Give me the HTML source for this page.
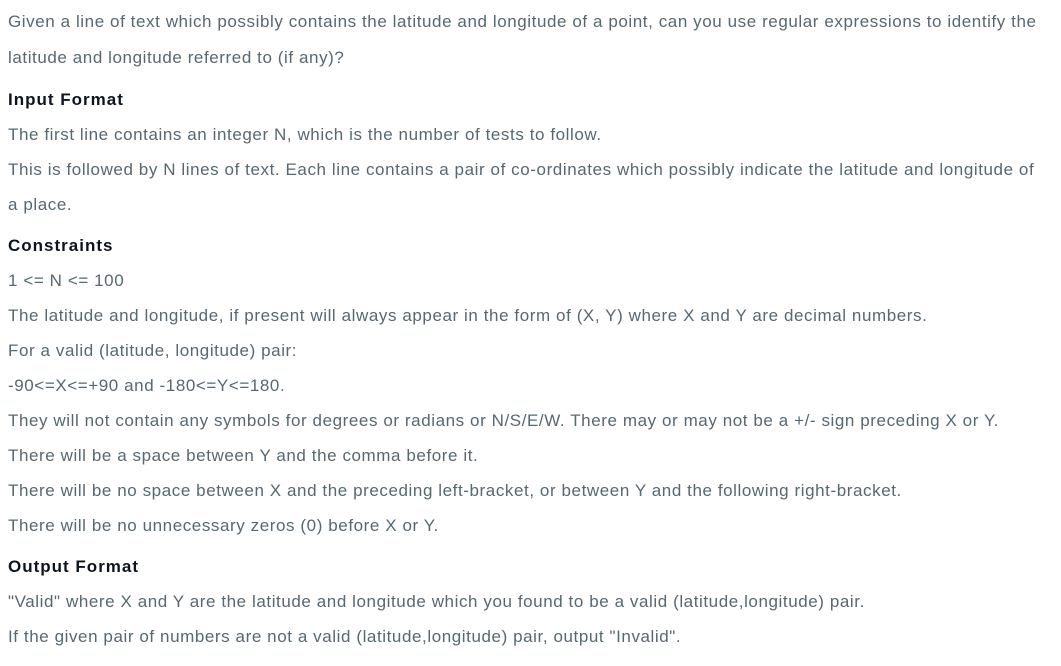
<!DOCTYPE html>
<html><head><meta charset="utf-8"><style>
body{margin:0;width:1061px;height:666px;background:#fff;position:relative;overflow:hidden;font-family:"Liberation Sans",Arial,sans-serif;}
div{position:absolute;left:8px;font-size:17px;letter-spacing:0.58px;color:#576871;white-space:nowrap;line-height:20px;}
.h{color:#0e141e;font-weight:bold;letter-spacing:1px;}
</style></head><body>
<div style="top:12px">Given a line of text which possibly contains the latitude and longitude of a point, can you use regular expressions to identify the</div>
<div style="top:48px">latitude and longitude referred to (if any)?</div>
<div class="h" style="top:90px">Input Format</div>
<div style="top:125px">The first line contains an integer N, which is the number of tests to follow.</div>
<div style="top:160px">This is followed by N lines of text. Each line contains a pair of co-ordinates which possibly indicate the latitude and longitude of</div>
<div style="top:195px">a place.</div>
<div class="h" style="top:236px">Constraints</div>
<div style="top:271px">1 &lt;= N &lt;= 100</div>
<div style="top:306px">The latitude and longitude, if present will always appear in the form of (X, Y) where X and Y are decimal numbers.</div>
<div style="top:341px">For a valid (latitude, longitude) pair:</div>
<div style="top:376px">-90&lt;=X&lt;=+90 and -180&lt;=Y&lt;=180.</div>
<div style="top:411px">They will not contain any symbols for degrees or radians or N/S/E/W. There may or may not be a +/- sign preceding X or Y.</div>
<div style="top:446px">There will be a space between Y and the comma before it.</div>
<div style="top:481px">There will be no space between X and the preceding left-bracket, or between Y and the following right-bracket.</div>
<div style="top:516px">There will be no unnecessary zeros (0) before X or Y.</div>
<div class="h" style="top:557px">Output Format</div>
<div style="top:592px">"Valid" where X and Y are the latitude and longitude which you found to be a valid (latitude,longitude) pair.</div>
<div style="top:627px">If the given pair of numbers are not a valid (latitude,longitude) pair, output "Invalid".</div>
</body></html>
